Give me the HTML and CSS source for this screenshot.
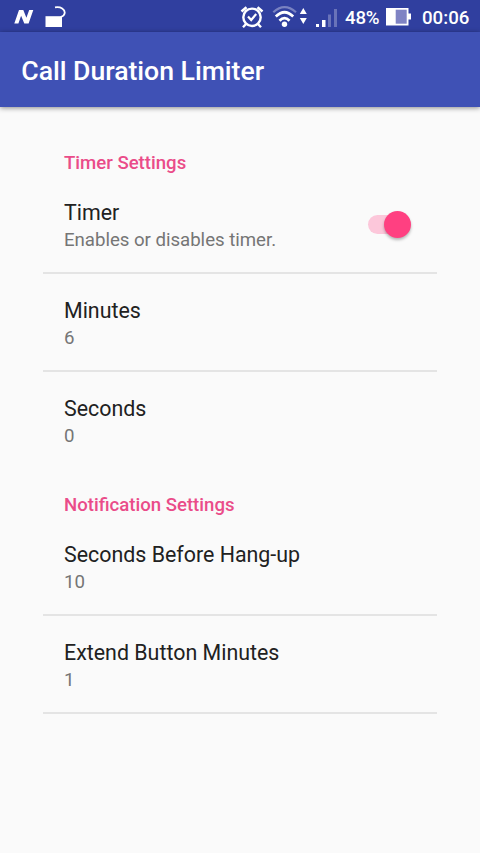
FILE: index.html
```html
<!DOCTYPE html>
<html lang="en">
<head>
<meta charset="utf-8">
<title>Call Duration Limiter</title>
<link rel="stylesheet" href="styles.css">
</head>
<body>
<div class="status">
  <svg class="icon-n" width="20" height="16" viewBox="0 0 20 16"><path d="M0.300 14.500L5 1H9.300L12.400 8.700L15.200 1H19.300L14.600 14.500H10.300L7.100 6.700L4.400 14.500Z" fill="#fff"/></svg>
  <svg class="icon-lock" width="22" height="22" viewBox="0 0 22 22"><path d="M.5 10.200h16.500V21H.5z" fill="#fff"/><path d="M10 1.300C16 .3 20 3.400 19.700 7c-.2 2-1.700 3.300-4 4" fill="none" stroke="#fff" stroke-width="1.800"/></svg>
  <svg class="icon-alarm" width="24" height="24" viewBox="0 0 24 24" fill="none" stroke="#fff"><circle cx="12" cy="12.300" r="8.700" stroke-width="2.400"/><path d="M8 11.500l3.200 3.500 5-6" stroke-width="2.200"/><path d="M1.500 6.500L6.500 2.300M22.500 6.500L17.500 2.300" stroke-width="2.600"/><path d="M6 19l-3 3.300M18 19l3 3.300" stroke-width="2.400"/></svg>
  <svg class="icon-wifi" width="36" height="24" viewBox="0 0 36 24" fill="none" stroke="#fff"><path d="M1.300 7.200Q12.500-3 24 7.200" stroke-width="2.200" stroke="#7982c1"/><path d="M3.800 11.500Q12.500 3 21.200 11.500M7.500 15.800Q12.500 10.600 17.500 15.800" stroke-width="2.700"/><circle cx="12.500" cy="19.200" r="2.700" fill="#fff" stroke="none"/><path d="M27.800 9h7L31.300 3zM27.800 13h7L31.300 19z" fill="#fff" stroke="none"/></svg>
  <svg class="icon-signal" width="22" height="19" viewBox="0 0 22 19"><path d="M0 15h3v3H0zM6 11h3.500V18H6z" fill="#fff"/><path d="M12 5.500h3v12.500h-3zM18 0h3v18h-3z" fill="#6973b9"/></svg>
  <span class="percent">48%</span>
  <svg class="icon-battery" width="26" height="18" viewBox="0 0 26 18"><path d="M0 0h22.500v17.500H0z" fill="#fff"/><path d="M9.700 1.700h11v14h-11z" fill="#7f83c4"/><path d="M22 5.500h3v6h-3z" fill="#fff"/></svg>
  <span class="clock">00:06</span>
</div>
<header class="appbar"><h1>Call Duration Limiter</h1></header>
<main class="settings">
  <h2 class="category">Timer Settings</h2>
  <section class="row">
    <div class="copy"><div class="name">Timer</div><div class="value">Enables or disables timer.</div></div>
    <div class="switch"><div class="thumb"></div></div>
  </section>
  <section class="row">
    <div class="copy"><div class="name">Minutes</div><div class="value">6</div></div>
  </section>
  <section class="row last">
    <div class="copy"><div class="name">Seconds</div><div class="value">0</div></div>
  </section>
  <h2 class="category">Notification Settings</h2>
  <section class="row">
    <div class="copy"><div class="name">Seconds Before Hang-up</div><div class="value">10</div></div>
  </section>
  <section class="row">
    <div class="copy"><div class="name">Extend Button Minutes</div><div class="value">1</div></div>
  </section>
</main>
</body>
</html>
```
FILE: styles.css
```css
* { box-sizing: border-box; }
body {
  margin: 0;
  min-height: 853px;
  background: #fafafa;
  font-family: Roboto, "Liberation Sans", sans-serif;
  overflow: hidden;
}
svg { display: block; flex: none; }
.status {
  display: flex;
  height: 32px;
  padding-left: 14px;
  background: #303f9f;
  color: #fff;
  font-size: 18.67px;
  font-weight: 500;
  line-height: 36px;
  white-space: nowrap;
}
.icon-n { margin-top: 9px; }
.icon-lock { margin: 6px 0 0 11px; }
.icon-alarm { margin: 5px 0 0 173px; }
.icon-wifi { margin: 5px 0 0 8px; }
.icon-signal { margin: 9px 0 0 8px; }
.percent { width: 41px; margin-left: 7px; letter-spacing: -.2px; }
.icon-battery { margin-top: 8px; }
.clock { margin-left: 10px; }
.appbar {
  display: flex;
  align-items: center;
  height: 75px;
  padding-left: 21.33px;
  background: #3f51b5;
  box-shadow: 0 1px 5px rgba(0, 0, 0, .45);
}
h1 {
  margin: 3px 0 0;
  color: #fff;
  font-size: 26.67px;
  font-weight: 500;
  letter-spacing: -.04px;
  line-height: 32px;
}
.settings { padding: 21px 42.67px 0; }
.category {
  height: 48px;
  margin: 0;
  padding: 24px 21.33px 0;
  color: #ea4c89;
  font-size: 18.6px;
  font-weight: 500;
  line-height: 22px;
}
.row {
  display: flex;
  align-items: center;
  justify-content: space-between;
  height: 98px;
  padding: 0 21.33px;
  border-bottom: 2px solid #e4e4e4;
}
.row.last { border-bottom-color: transparent; }
.copy { padding-top: 4px; }
.name {
  color: #212121;
  font-size: 21.4px;
  line-height: 28px;
}
.value {
  color: #757575;
  font-size: 18.67px;
  letter-spacing: -.03px;
  line-height: 26px;
}
.switch {
  display: flex;
  align-items: center;
  justify-content: flex-end;
  width: 38px;
  height: 19px;
  margin-right: 10px;
  border-radius: 10px;
  background: #fcc7da;
}
.thumb {
  flex: none;
  width: 27px;
  height: 27px;
  margin-right: -5px;
  border-radius: 50%;
  background: #ff4081;
  box-shadow: 0 2px 3px rgba(0, 0, 0, .28);
}
```
